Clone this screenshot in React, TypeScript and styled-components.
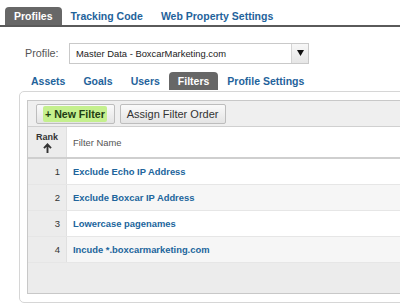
import React from "react";
import styled, { createGlobalStyle } from "styled-components";

const Global = createGlobalStyle`
  html, body { margin: 0; padding: 0; background: #fff; overflow: hidden; }
  body { font-family: "Liberation Sans", Arial, sans-serif; width: 400px; height: 307px; }
`;

const Page = styled.div`
  width: 400px;
  height: 307px;
  overflow: hidden;
  position: relative;
`;

const TopTabs = styled.div`
  display: flex;
  align-items: flex-end;
  padding: 7px 0 0 5px;
  border-bottom: 2px solid #5a5a5a;
  height: 18px;
`;

const Tab = styled.div<{ $active?: boolean }>`
  height: 18px;
  line-height: 19px;
  padding: 0 9px;
  font-size: 10.5px;
  font-weight: bold;
  color: ${(p) => (p.$active ? "#fff" : "#1f639b")};
  background: ${(p) => (p.$active ? "#676767" : "transparent")};
  border-radius: 4px 4px 0 0;
  white-space: nowrap;
`;

const ProfileRow = styled.div`
  display: flex;
  align-items: center;
  gap: 10px;
  margin: 16px 0 0 25px;
  height: 20px;
`;

const Label = styled.span`
  font-size: 10.8px;
  color: #555;
  width: 34px;
`;

const Select = styled.div`
  display: flex;
  width: 238px;
  height: 19px;
  border: 1px solid #c9c9c9;
  background: #fff;
`;

const SelectText = styled.div`
  flex: 1;
  font-size: 9.4px;
  line-height: 19px;
  padding-left: 6px;
  color: #222;
`;

const SelectArrow = styled.div`
  width: 16px;
  border-left: 1px solid #d4d4d4;
  background: linear-gradient(#f7f7f7, #e6e6e6);
  display: flex;
  align-items: center;
  justify-content: center;
`;

const SubTabs = styled.div`
  display: flex;
  margin: 9px 0 0 22px;
  height: 18px;
`;

const Panel = styled.div`
  margin: 1px 0 0 19px;
  width: 420px;
  border: 1px solid #d6d6d6;
  border-radius: 5px;
  padding: 8px 0 8px 7px;
`;

const Table = styled.div`
  border: 1px solid #c8c8c8;
  border-right: none;
`;

const Toolbar = styled.div`
  display: flex;
  gap: 5px;
  align-items: center;
  height: 25px;
  padding-left: 8px;
  background: #efefef;
  border-bottom: 1px solid #d0d0d0;
`;

const Button = styled.div`
  height: 18px;
  display: flex;
  align-items: center;
  padding: 0 7px 0 6px;
  border: 1px solid #bdbdbd;
  border-radius: 2px;
  background: linear-gradient(#fafafa, #e4e4e4);
  font-size: 11px;
  color: #333;
  white-space: nowrap;
`;

const Highlight = styled.span`
  background: #c5f08e;
  font-weight: bold;
  font-size: 10.6px;
  color: #1f3d14;
  padding: 2px 2px;
  border-radius: 2px;
`;

const Row = styled.div<{ $alt?: boolean; $head?: boolean }>`
  display: flex;
  height: ${(p) => (p.$head ? "30px" : "25px")};
  background: ${(p) => (p.$alt ? "#f6f6f6" : "#fff")};
  border-bottom: ${(p) => (p.$head ? "2px solid #cfcfcf" : "1px solid #e6e6e6")};
`;

const RankCell = styled.div<{ $head?: boolean }>`
  width: 39px;
  flex: none;
  background: #ececec;
  border-right: 1px solid #e0e0e0;
  display: flex;
  flex-direction: ${(p) => (p.$head ? "column" : "row")};
  align-items: center;
  justify-content: ${(p) => (p.$head ? "center" : "flex-end")};
  padding-right: ${(p) => (p.$head ? "0" : "6px")};
  box-sizing: border-box;
  font-size: 9.5px;
  color: #333;
`;

const RankTitle = styled.span`
  font-weight: bold;
  font-size: 9px;
  color: #333;
  line-height: 11px;
`;

const NameCell = styled.div<{ $head?: boolean }>`
  flex: 1;
  display: flex;
  align-items: center;
  padding-left: 6px;
  font-size: 9.4px;
  font-weight: ${(p) => (p.$head ? "normal" : "bold")};
  color: ${(p) => (p.$head ? "#555" : "#21659c")};
`;

const Footer = styled.div`
  height: 30px;
  background: #ececec;
`;

const filters = [
  "Exclude Echo IP Address",
  "Exclude Boxcar IP Address",
  "Lowercase pagenames",
  "Incude *.boxcarmarketing.com",
];

export default function App() {
  return (
    <Page>
      <Global />
      <TopTabs>
        <Tab $active>Profiles</Tab>
        <Tab>Tracking Code</Tab>
        <Tab>Web Property Settings</Tab>
      </TopTabs>
      <ProfileRow>
        <Label>Profile:</Label>
        <Select>
          <SelectText>Master Data - BoxcarMarketing.com</SelectText>
          <SelectArrow>
            <svg width="7" height="6" viewBox="0 0 7 6">
              <path d="M0 0 H7 L3.5 6 Z" fill="#111" />
            </svg>
          </SelectArrow>
        </Select>
      </ProfileRow>
      <SubTabs>
        <Tab>Assets</Tab>
        <Tab>Goals</Tab>
        <Tab>Users</Tab>
        <Tab $active>Filters</Tab>
        <Tab>Profile Settings</Tab>
      </SubTabs>
      <Panel>
        <Table>
          <Toolbar>
            <Button>
              <Highlight>+ New Filter</Highlight>
            </Button>
            <Button>Assign Filter Order</Button>
          </Toolbar>
          <Row $head>
            <RankCell $head>
              <RankTitle>Rank</RankTitle>
              <svg width="9" height="10" viewBox="0 0 9 10">
                <path d="M4.5 10 V1.8 M1 5.2 L4.5 1.4 L8 5.2" stroke="#333" strokeWidth="1.9" fill="none" />
              </svg>
            </RankCell>
            <NameCell $head>Filter Name</NameCell>
          </Row>
          {filters.map((f, i) => (
            <Row key={f} $alt={i % 2 === 1}>
              <RankCell>{i + 1}</RankCell>
              <NameCell>{f}</NameCell>
            </Row>
          ))}
          <Footer />
        </Table>
      </Panel>
    </Page>
  );
}
